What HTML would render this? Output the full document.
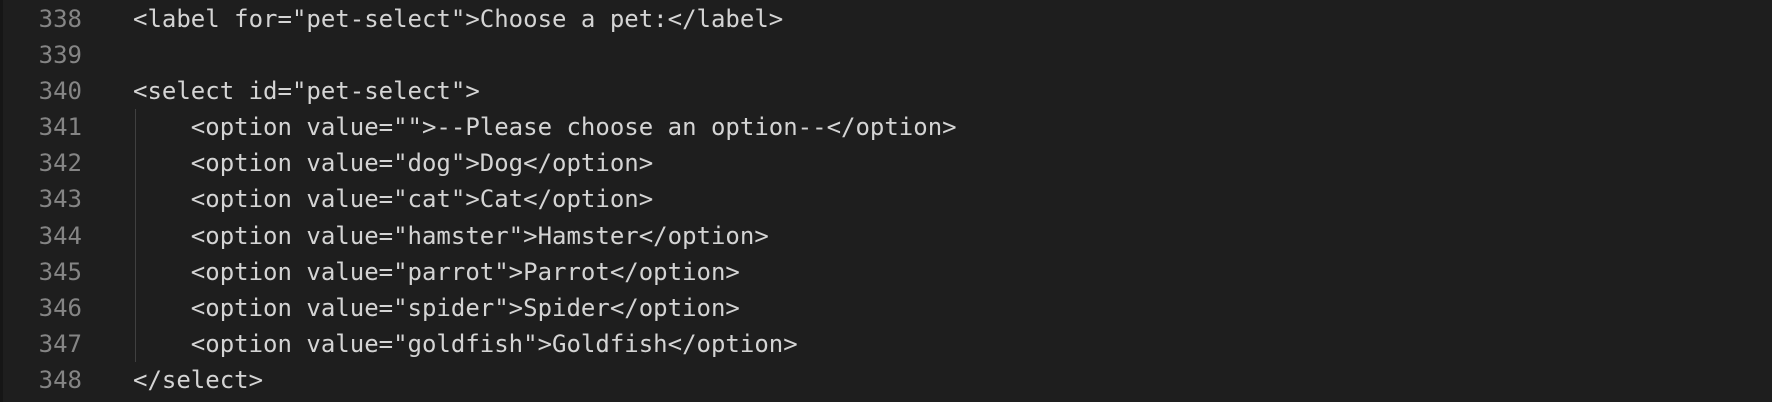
<!DOCTYPE html>
<html><head><meta charset="utf-8"><style>
html,body{margin:0;padding:0;background:#1e1e1e;width:1772px;height:402px;overflow:hidden}
.strip{position:absolute;left:0;top:0;width:3px;height:402px;background:#161616}
.ln{position:absolute;left:0;width:82px;text-align:right;color:#858585}
.code{position:absolute;left:133px;color:#d4d4d4;white-space:pre}
.row{font-family:"DejaVu Sans Mono","Liberation Mono",monospace;font-size:24px;height:36.1px;line-height:36.1px}
.guide{position:absolute;left:135px;top:109px;width:1px;height:253px;background:#404040}
</style></head><body>
<div class="strip"></div>
<div class="guide"></div>
<div style="position:absolute;top:1px;left:0;width:1772px">
<div class="row" style="position:relative"><span class="ln">338</span><span class="code">&lt;label for="pet-select"&gt;Choose a pet:&lt;/label&gt;</span></div>
<div class="row" style="position:relative"><span class="ln">339</span><span class="code"></span></div>
<div class="row" style="position:relative"><span class="ln">340</span><span class="code">&lt;select id="pet-select"&gt;</span></div>
<div class="row" style="position:relative"><span class="ln">341</span><span class="code">    &lt;option value=""&gt;--Please choose an option--&lt;/option&gt;</span></div>
<div class="row" style="position:relative"><span class="ln">342</span><span class="code">    &lt;option value="dog"&gt;Dog&lt;/option&gt;</span></div>
<div class="row" style="position:relative"><span class="ln">343</span><span class="code">    &lt;option value="cat"&gt;Cat&lt;/option&gt;</span></div>
<div class="row" style="position:relative"><span class="ln">344</span><span class="code">    &lt;option value="hamster"&gt;Hamster&lt;/option&gt;</span></div>
<div class="row" style="position:relative"><span class="ln">345</span><span class="code">    &lt;option value="parrot"&gt;Parrot&lt;/option&gt;</span></div>
<div class="row" style="position:relative"><span class="ln">346</span><span class="code">    &lt;option value="spider"&gt;Spider&lt;/option&gt;</span></div>
<div class="row" style="position:relative"><span class="ln">347</span><span class="code">    &lt;option value="goldfish"&gt;Goldfish&lt;/option&gt;</span></div>
<div class="row" style="position:relative"><span class="ln">348</span><span class="code">&lt;/select&gt;</span></div>
</div>
</body></html>
